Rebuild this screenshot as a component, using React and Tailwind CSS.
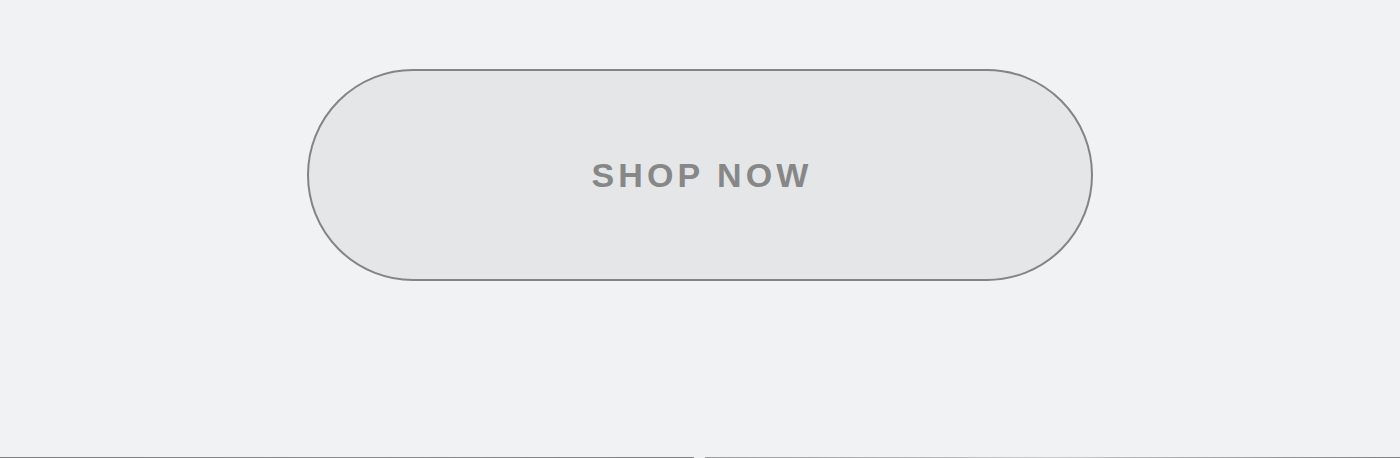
export default function App() {
  return (
    <div className="min-h-screen bg-[#f1f2f4] flex flex-col items-center pt-[69px] overflow-hidden" style={{ fontFamily: '"Liberation Sans", Arial, sans-serif' }}>
      <button
        type="button"
        className="w-[786px] h-[212px] rounded-full border-2 border-[#848484] bg-[#e5e6e8] flex items-center justify-center"
      >
        <span className="text-[34px] font-bold tracking-[0.12em] text-[#878787] leading-none pl-[4px]">SHOP NOW</span>
      </button>

      {/* product tiles start just below the call to action */}
      <div className="w-full mt-[176px] flex gap-[11px]">
        <div className="h-[300px] w-[694px] bg-gradient-to-r from-[#7b7c7d] via-[#8a8b8c] to-[#7f8081]" />
        <div className="h-[300px] flex-1 bg-gradient-to-r from-[#9a9a9a] via-[#c9c9c9] to-[#7e7f80]" />
      </div>
    </div>
  );
}
